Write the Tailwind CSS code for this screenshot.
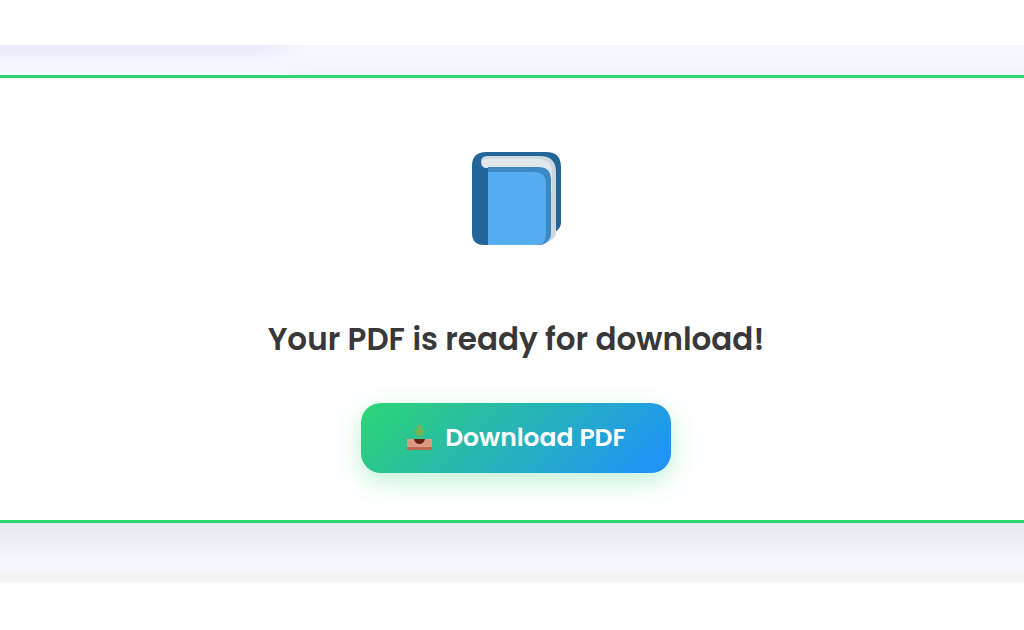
<!DOCTYPE html>
<html lang="en">
<head>
<meta charset="utf-8">
<meta name="viewport" content="width=device-width, initial-scale=1">
<title>Download PDF</title>
<script src="https://cdn.jsdelivr.net/npm/@tailwindcss/browser@4"></script>
</head>
<body class="min-h-screen bg-white font-['Poppins','Inter',sans-serif]">
  <header class="h-[45px] bg-white"></header>
  <main class="overflow-hidden bg-[#f7f8fe] pb-12">
    <div class="h-[30px]">
      <div class="h-full w-[30%] bg-linear-to-b from-[#e9eafb] via-[#f2f4fe] via-50% to-[#f7f8fc] mask-r-from-85%"></div>
    </div>
    <section class="-mx-12 flex flex-col items-center border-y-3 border-[#2fd573] bg-white pt-[73px] pb-[47px] pl-2 shadow-[0_14px_36px_rgba(0,0,0,0.08)]">
      <svg class="h-[96px] w-[92px]" viewBox="0 0 92 96" aria-hidden="true">
        <path d="M16 1h60q15 0 15 15v56q0 5-6 9L60 94H14Q2 94 2 82V15Q2 1 16 1Z" fill="#226699"/>
        <path d="M17 5h53q16 0 16 16v61q0 4-6 8l-8 4H60V17H17q-6 0-6-6t6-6Z" fill="#ccd6dd"/>
        <path d="M17 8h51q14 0 14 14v20H70L60 17H17q-5 0-5-5 0-4 5-4Z" fill="#e1e8ed"/>
        <path d="M18 16h50q13 0 13 13v54q0 4-3 7-4 4-9 4H18Z" fill="#3b88c3"/>
        <path d="M18 21h46q12 0 12 12v49q0 7-3 10-2 2-5 2H18Z" fill="#55acee"/>
      </svg>
      <h1 class="mt-[68px] text-[31px] leading-[48px] font-semibold text-[#383838]">Your PDF is ready for download!</h1>
      <button type="button" class="mt-10 flex h-[70px] w-[310px] items-center justify-center gap-3 rounded-[20px] bg-[linear-gradient(135deg,#2ed573,#1e90ff)] text-[25px] font-semibold text-white shadow-[0_8px_26px_rgba(46,213,115,0.3)]">
        <svg class="h-[27px] w-[27px]" viewBox="0 0 27 27" aria-hidden="true">
          <path d="M1 14h25v10q0 1-1 1H2q-1 0-1-1Z" fill="#dd9a82"/>
          <path d="M1 22h25v2q0 1-1 1H2q-1 0-1-1Z" fill="#c1694f"/>
          <path d="M8 14h11q-1 5-5.500 5T8 14Z" fill="#662113"/>
          <path d="M11 0h5v5h4l-6.500 8L7 5h4Z" fill="#77b255"/>
        </svg>
        <span>Download PDF</span>
      </button>
    </section>
  </main>
  <footer class="h-[13px] bg-linear-to-b from-[#f4f4f4] from-85% to-white"></footer>
</body>
</html>
